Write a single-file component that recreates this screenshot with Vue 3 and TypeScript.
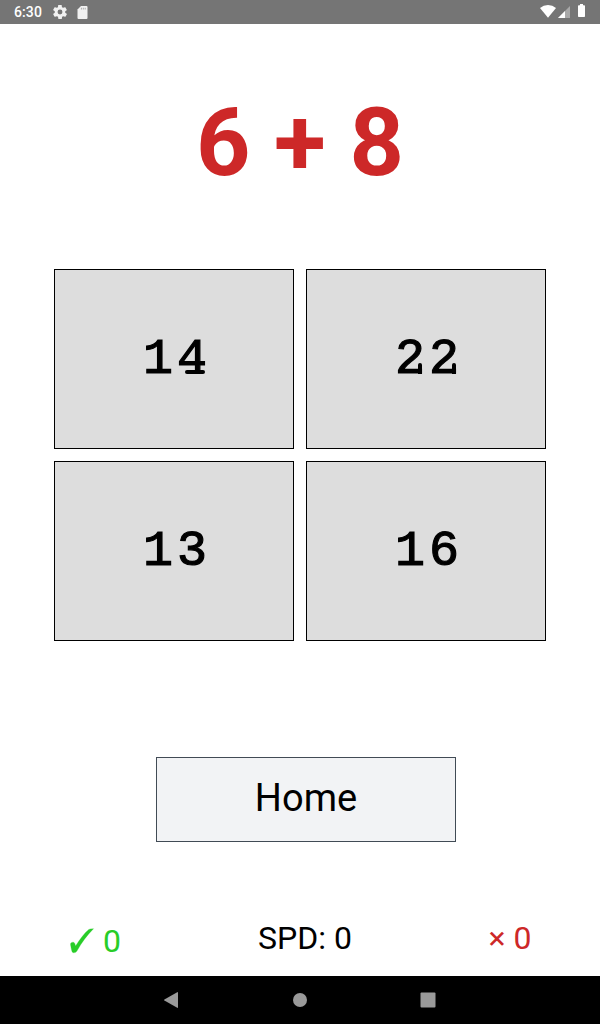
<script setup lang="ts">
import { ref } from 'vue'

const question = ref('6 + 8')
const answers = ref<string[]>(['14', '22', '13', '16'])
const correct = ref(0)
const speed = ref(0)
const wrong = ref(0)
</script>

<template>
  <div class="screen">
    <header class="status">
      <span class="clock">6:30</span>
      <svg class="gear" width="14" height="14" viewBox="2 2 20 20"><path fill="#f1f1f1" fill-rule="evenodd" d="M19.4 13c0-.3.1-.6.1-1s0-.7-.1-1l2.1-1.6c.2-.2.3-.4.1-.7l-2-3.400c-.1-.2-.4-.3-.6-.2l-2.500 1c-.5-.4-1.100-.7-1.700-1l-.4-2.600c0-.3-.2-.5-.5-.5h-4c-.3 0-.5.2-.5.5L9.100 5.100c-.6.3-1.100.6-1.700 1L5 5.100c-.3-.1-.5 0-.7.2l-2 3.400c-.1.300 0 .5.2.7L4.600 11c0 .3-.1.600-.1 1s0 .7.1 1l-2.100 1.600c-.2.200-.3.400-.2.700l2 3.400c.2.200.4.300.7.200l2.500-1c.5.400 1.100.700 1.700 1l.4 2.600c0 .3.200.5.5.5h4c.2 0 .5-.2.500-.5l.4-2.600c.6-.3 1.100-.6 1.700-1l2.400 1c.3.100.5 0 .7-.2l2-3.400c.1-.3 0-.5-.2-.7zM12 15.500a3.500 3.500 0 1 1 0-7 3.500 3.500 0 0 1 0 7z" /></svg>
      <svg class="card" width="11" height="13" viewBox="0 0 10 13"><path fill="#f1f1f1" d="M3.500 0H9q1 0 1 1v11q0 1-1 1H1q-1 0-1-1V3.500z" /><path fill="#aaa" d="M3.400 1.800h1v1.800h-1zM5.300 1.800h1v1.800h-1zM7.200 1.800h1v1.800h-1z" /></svg>
      <svg class="wifi" width="16" height="13" viewBox="0 0 16 13"><path fill="#fff" d="M0 3Q3.500 0 8 0t8 3L8 12.700z" /></svg>
      <svg class="signal" width="12" height="12" viewBox="0 0 12 12"><path fill="#a9a9a9" d="M12 0v12H0z" /><path fill="#fff" d="M7 5v7H0z" /></svg>
      <svg class="battery" width="7" height="13" viewBox="0 0 7 13"><path fill="#fff" d="M2 0h3v1.300h1.200q.8 0 .8.800v10.100q0 .8-.8.800H.8q-.8 0-.8-.8V2.100q0-.8.8-.8H2z" /></svg>
    </header>
    <main>
      <h1>{{ question }}</h1>
      <div class="answers">
        <button v-for="a in answers" :key="a" class="answer">
          <span class="number"><span v-for="(d, i) in a" :key="i" :class="['digit', 'd' + d]">{{ d }}</span></span>
        </button>
      </div>
      <button class="home">Home</button>
      <div class="scores">
        <div class="correct">
          <svg width="26" height="26" viewBox="0 0 26 26"><path fill="#28cd28" stroke="#28cd28" stroke-width=".3" d="M.6 17C.2 15 1.400 14.200 3 14.200c1.500 0 1.900 1.300 2.600 3.800C10 11.200 14.500 4.900 18.800 1.500q1-.8 4.700-.8C17.200 7 11.800 14.200 7.200 22.600 6.300 24.300 5.300 24.700 3.500 24.700c-1.700 0-1.800-2.300-2.900-7.700z" /></svg>
          <span>{{ correct }}</span>
        </div>
        <div class="speed">SPD: {{ speed }}</div>
        <div class="wrong">× {{ wrong }}</div>
      </div>
    </main>
    <nav>
      <svg width="14" height="16" viewBox="0 0 14 16"><path d="M13.200.2q.8-.4.8.5v14.600q0 .9-.8.500L.4 8.500q-.6-.5 0-1z" /></svg>
      <svg width="14" height="14" viewBox="0 0 14 14"><circle cx="7" cy="7" r="7" /></svg>
      <svg width="16" height="16" viewBox="0 0 16 16"><rect x=".5" y=".5" width="15" height="15" rx="1" /></svg>
    </nav>
  </div>
</template>

<style>
body { margin: 0; background: #fff; }
</style>

<style scoped>
.screen { width: 600px; height: 1024px; display: flex; flex-direction: column; overflow: hidden; background: #fff; font-family: Roboto, sans-serif; color: #000; }
.status { height: 24px; flex: none; display: flex; align-items: flex-start; background: #757575; box-sizing: border-box; padding-left: 14px; }
.status svg { display: block; flex: none; }
.clock { width: 39px; font-size: 14px; font-weight: 500; line-height: 24px; letter-spacing: .1px; color: #fff; }
.gear { margin-top: 5px; }
.card { margin: 6px 0 0 10px; }
.wifi { margin: 5px 0 0 452px; }
.signal { margin: 6px 0 0 2px; }
.battery { margin: 4px 0 0 8px; }
main { flex: 1; display: flex; flex-direction: column; align-items: center; }
h1 { margin: 62px 0 0; height: 183px; font-size: 95px; font-weight: 700; line-height: 113px; color: #cd2828; box-sizing: border-box; white-space: pre; }
.answers { display: grid; grid-template-columns: 240px 240px; grid-auto-rows: 180px; gap: 12px; }
button { margin: 0; padding: 0; border-radius: 0; color: #000; box-sizing: border-box; }
.answer { padding-top: 2px; border: 1px solid #000; background: #ddd; font: 400 50px/64px "Liberation Mono", monospace; -webkit-text-stroke: 1.200px #000; }
.number { display: flex; justify-content: center; padding-left: 2px; }
.digit { position: relative; width: 34px; height: 64px; text-align: center; }
/* slab terminals on the 4 and the 2 */
.d4::after, .d2::after { content: ""; position: absolute; background: #000; }
.d4::after { left: 10px; top: 42px; width: 20px; height: 4px; border-radius: 2px; }
.d2::after { left: 25px; top: 35px; width: 4px; height: 11px; border-radius: 2px 2px 0 0; }
.home { width: 300px; height: 85px; margin: 116px 0 0 12px; border: 1px solid #414b55; background: #f2f3f5; font: 400 38px/44px Roboto, sans-serif; padding-bottom: 3px; }
.scores { width: 100%; display: grid; grid-template-columns: 200px 1fr 200px; margin-top: 76px; font-size: 32px; line-height: 40px; }
.correct { display: flex; align-items: flex-start; color: #28cd28; padding: 3px 0 0 70px; }
.correct svg { margin: 7px 7px 0 0; }
.speed { padding-left: 58px; white-space: nowrap; }
.wrong { padding-left: 88.500px; color: #cd2828; }
nav { height: 48px; flex: none; background: #000; display: grid; grid-template-columns: 129px 127px 16px; align-items: center; padding-left: 164px; }
nav svg { fill: #999; }
</style>
